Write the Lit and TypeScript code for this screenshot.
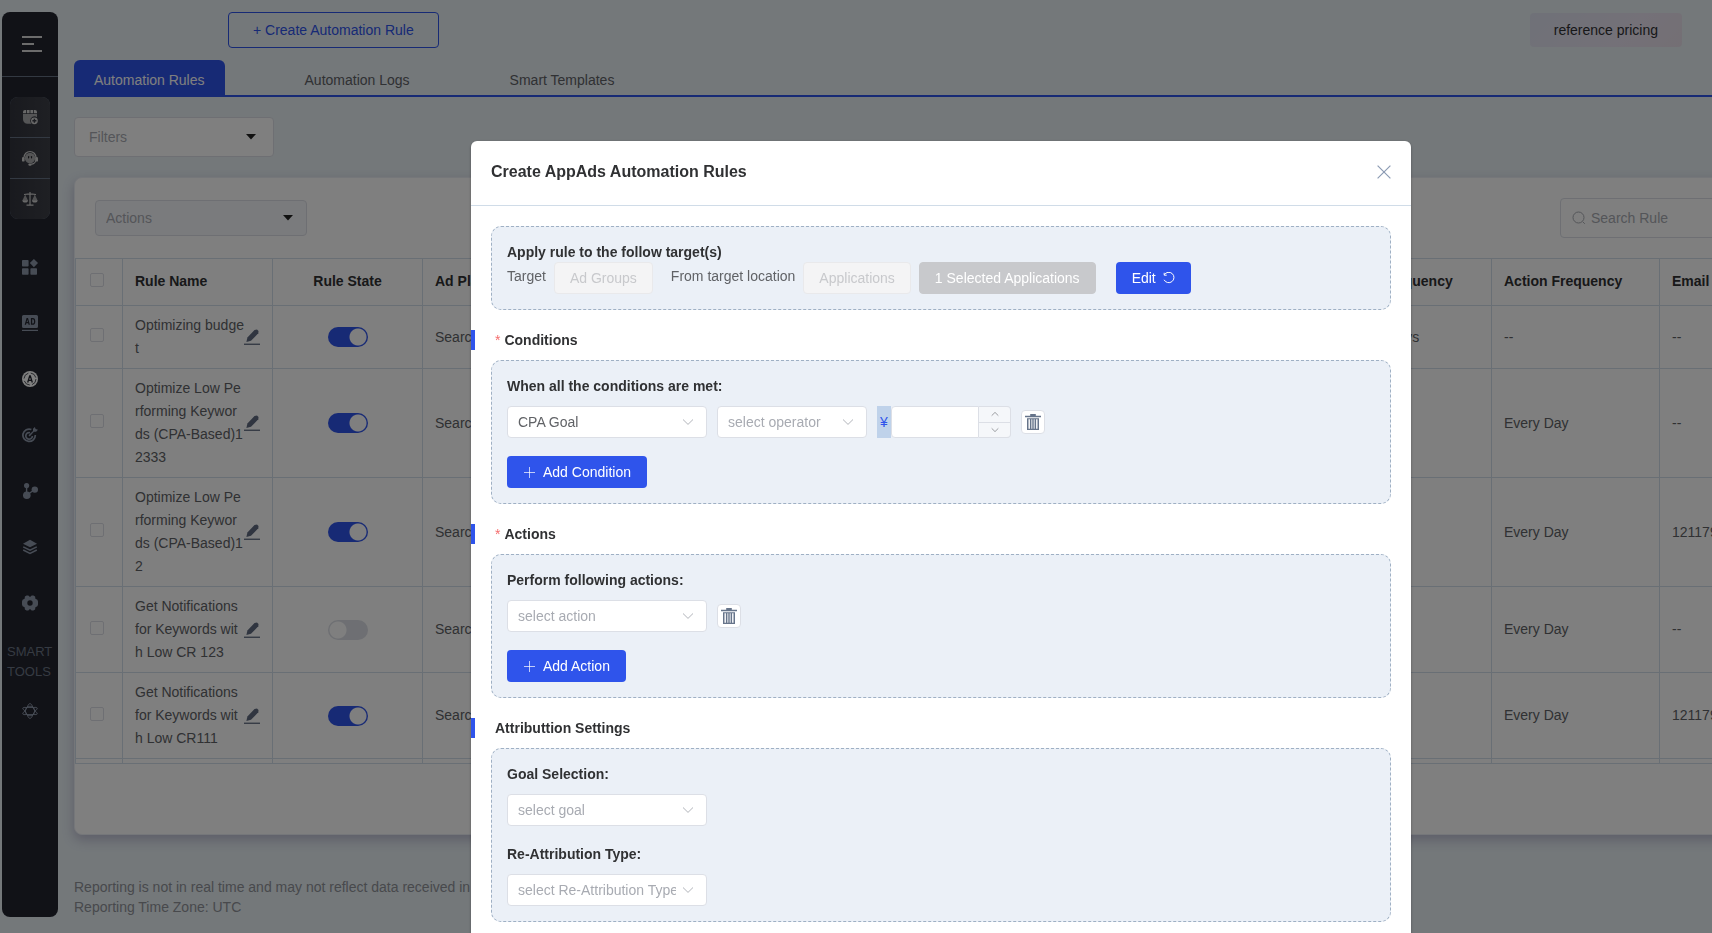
import { LitElement, html, css, svg, nothing, TemplateResult } from "lit";
import { customElement, property } from "lit/decorators.js";

interface Rule {
  name: string;
  on: boolean;
  platform: string;
  check: string;
  frequency: string;
  email: string;
}

const keywordRule = (name: string, on: boolean, email: string): Rule => ({
  name,
  on,
  platform: "Search Ads",
  check: "",
  frequency: "Every Day",
  email,
});

const RULES: Rule[] = [
  {
    name: "Optimizing budget",
    on: true,
    platform: "Search Ads",
    check: "Every 2 Days",
    frequency: "--",
    email: "--",
  },
  keywordRule("Optimize Low Performing Keywords (CPA-Based)12333", true, "--"),
  keywordRule("Optimize Low Performing Keywords (CPA-Based)12", true, "1211790"),
  keywordRule("Get Notifications for Keywords with Low CR 123", false, "--"),
  keywordRule("Get Notifications for Keywords with Low CR111", true, "1211790"),
];

const icon = (body: TemplateResult, size = 16, box = 16) => html`
  <svg width=${size} height=${size} viewBox="0 0 ${box} ${box}" fill="currentColor" aria-hidden="true">${body}</svg>
`;

const calendar = icon(svg`
  <path d="M1 4.200V3a2 2 0 0 1 2-2h1.200v3.200zM5 1h2.600v3.200H5zM8.400 1H11v3.200H8.400zM11.800 1H13a2 2 0 0 1 2 2v1.200h-3.200z"/>
  <path d="M1 5h14v3.200a4.300 4.300 0 0 0-6.800 3.400c0 1.300.5 2.400 1.400 3.200H5.500A4.500 4.500 0 0 1 1 10.300z" opacity=".75"/>
  <path fill-rule="evenodd" d="M12.400 8.400a3.400 3.400 0 1 0 0 6.800 3.400 3.400 0 0 0 0-6.800zm-.7 1.400h1.400v1.300h1.300v1.400h-1.300v1.300h-1.400v-1.300h-1.300v-1.400h1.300z"/>
`);

const headset = icon(svg`
  <path d="M2 7.500a6 6 0 0 1 12 0v2a5 5 0 0 1-4.800 4.700" fill="none" stroke="currentColor" stroke-width="1.200"/>
  <rect x="0" y="7" width="2.600" height="4.600" rx="1.200"/>
  <rect x="13.400" y="7" width="2.600" height="4.600" rx="1.200"/>
  <rect x="6.400" y="13.400" width="3.200" height="2.400" rx="1.200"/>
  <circle cx="8" cy="8" r="5.200" opacity=".75"/>
  <rect x="6" y="6" width="1.200" height="2.400" rx=".6" fill="#26282f"/>
  <rect x="8.900" y="6" width="1.200" height="2.400" rx=".6" fill="#26282f"/>
`);

const scales = icon(svg`
  <path d="M7.400 1h1.200v12.600H7.400zM2 3.100l5.400-.9v-.5h1.200v.5l5.400.9v1L8.600 3.400H7.400L2 4.100zM4.500 13.600h7v1.200h-7z"/>
  <path d="M3.200 3.600 .4 9.600h5.600zM12.800 3.600 10 9.600h5.600z" opacity=".7"/>
  <path d="M.4 9.200h5.600a2.800 2.400 0 0 1-5.600 0zM10 9.200h5.600a2.800 2.400 0 0 1-5.600 0z"/>
`);

const dashboard = icon(svg`
  <rect x="0" y="1" width="6.600" height="6.600" rx=".8"/>
  <rect x="0" y="9.200" width="6.600" height="6.600" rx=".8"/>
  <rect x="8.400" y="9.200" width="6.600" height="6.600" rx=".8"/>
  <path d="M11.900 0l4.100 4.100-4.100 4.100-4.100-4.100z"/>
`);

const adBoard = icon(svg`
  <path fill-rule="evenodd" d="M1.500 0h13A1.500 1.500 0 0 1 16 1.500v10a1.500 1.500 0 0 1-1.500 1.500h-13A1.500 1.500 0 0 1 0 11.500v-10A1.500 1.500 0 0 1 1.500 0zM4.600 3 2.700 9.800h1.300l.4-1.500h1.800l.4 1.500h1.300L6 3zm.7 1.600.6 2.500H4.700zM8.900 3v6.800h1.900c1.600 0 2.500-1.200 2.500-3.400S12.400 3 10.800 3zm1.300 1.200h.5c.9 0 1.300.8 1.300 2.200s-.4 2.200-1.300 2.200h-.5z"/>
  <rect x="0" y="14.800" width="16" height="1.200"/>
`);

const appCoin = icon(svg`
  <circle cx="8" cy="8" r="8"/>
  <circle cx="8" cy="8" r="6" fill="none" stroke="#3a3c46" stroke-width=".9" stroke-dasharray="7 2.425"/>
  <path d="M5.700 11.500 7.700 4.800h.6l2 6.700M6.500 9.400h3" fill="none" stroke="#22242e" stroke-width="1.300"/>
`);

const target = icon(svg`
  <path d="M9.400 2.500A6.200 6.200 0 1 0 13.300 8" fill="none" stroke="currentColor" stroke-width="1.700"/>
  <path d="M8 5.700A3.300 3.300 0 1 0 10.400 9" fill="none" stroke="currentColor" stroke-width="1.700"/>
  <path d="M6.500 8.300 11 3.900V1.800L12.900 0l.7 2 2.400.8-1.900 2h-2.200L7.700 9.500z"/>
`);

const branch = icon(svg`
  <circle cx="4.600" cy="2.600" r="2.600"/>
  <circle cx="12.800" cy="6.600" r="3.200"/>
  <circle cx="4.800" cy="12.200" r="3.800"/>
  <path d="M4.600 3v8M5 12l7-5" stroke="currentColor" stroke-width="1.400"/>
`);

const layers = icon(svg`
  <path d="M8 .8 15 4.800 8 8.200 1 4.800z"/>
  <path d="M1.200 7.800 8 11.200l6.800-3.400M1.200 11l6.800 3.400 6.800-3.400" fill="none" stroke="currentColor" stroke-width="1.500"/>
`);

const gear = icon(svg`
  <path fill-rule="evenodd" d="M4.600.6h1.700L8 2 9.700.6h1.700l1.700 1 .3 2.200 2 .9.600 1.800v3l-.6 1.800-2 .9-.3 2.200-1.700 1H9.700L8 14l-1.700 1.400H4.600l-1.700-1-.3-2.200-2-.9L0 9.500v-3l.6-1.800 2-.9.3-2.200zM8 5.300a2.700 2.700 0 1 0 0 5.400 2.700 2.700 0 0 0 0-5.400z"/>
`);

const atom = icon(svg`
  <g fill="none" stroke="currentColor" stroke-width=".9">
    <path d="M5 4.500Q6.400.5 8 .5t3 4q4-.6 4.300.6T12.800 8q2.800 1.800 2.500 2.900t-4.300.6q-1.400 4-3 4t-3-4q-4 .6-4.300-.6T3.200 8Q.4 6.200.7 5.100T5 4.500z"/>
    <circle cx="8" cy="8" r="4.800"/>
    <path d="M5 4.500h6L12.800 8 11 11.500H5L3.200 8z"/>
  </g>
`);

const pencil = icon(svg`
  <path d="M10.500 1 13 .6l1.500 1.500-.2 2.200L7 11.800l-4.600 1.300L3.400 8.400z"/>
  <rect x="0" y="14.600" width="16" height="1.300"/>
`);

const caret = icon(svg`<path d="M0 0h10L5 5.500z"/>`, 10, 10);
const chevron = (size: number, up = false) => html`
  <svg width=${size} height=${size} viewBox="0 0 12 12" fill="none" stroke="currentColor" stroke-width=".9" aria-hidden="true">
    <path d=${up ? "M1 8.500 6 3.600l5 4.900" : "M1 3.500 6 8.400l5-4.900"} />
  </svg>
`;
const magnifier = html`
  <svg width="14" height="14" viewBox="0 0 14 14" fill="none" stroke="currentColor" aria-hidden="true">
    <circle cx="6.500" cy="6.500" r="5.500" /><path d="M10.800 10.800l2 2" />
  </svg>
`;
const cross = html`
  <svg width="14" height="14" viewBox="0 0 14 14" stroke="currentColor" stroke-width="1.200" aria-hidden="true">
    <path d="M.6.6l12.800 12.800M13.400.6L.6 13.400" />
  </svg>
`;
const plus = html`
  <svg width="12" height="12" viewBox="0 0 12 12" stroke="currentColor" stroke-opacity=".7" aria-hidden="true">
    <path d="M6.500 1v11M1 6.500h11" />
  </svg>
`;
const redo = html`
  <svg width="12" height="12" viewBox="0 0 12 12" fill="none" stroke="currentColor" aria-hidden="true">
    <path d="M1.300 2.800A5.200 5.200 0 1 1 1.100 7.800M1.200.8v2.400h2.500" />
  </svg>
`;
const bin = icon(svg`
  <path d="M5.200 0h5.600v1.800H16v1.500H0V1.800h5.200z"/>
  <path fill-rule="evenodd" d="M2 4.200h12V16H2zm1.500 1v9.500h1.400V5.200zm2.900 0v9.500h.9V5.200zm2.300 0v9.500h.9V5.200zm2.400 0v9.500h1.400V5.200z"/>
`);

const base = css`
  :host {
    box-sizing: border-box;
    font: 14px/20px "Liberation Sans", Arial, sans-serif;
  }
  *,
  *::before,
  *::after {
    box-sizing: border-box;
  }
  svg {
    display: block;
    flex: none;
  }
  button,
  input,
  select {
    font: inherit;
    color: inherit;
    margin: 0;
    padding: 0;
    border: 0;
    outline: 0;
    background: none;
  }
  button {
    cursor: pointer;
  }
`;

@customElement("side-nav")
export class SideNav extends LitElement {
  static styles = [
    base,
    css`
      :host {
        display: flex;
        flex-direction: column;
        flex: none;
        width: 56px;
        margin: 12px 16px 16px 2px;
        border-radius: 8px;
        background: #22242e;
        color: #8e98ab;
      }
      .menu {
        display: flex;
        flex-direction: column;
        align-items: flex-start;
        gap: 5px;
        height: 65px;
        padding: 24px 20px;
        border-bottom: 1px solid #667385;
      }
      .bar {
        width: 20px;
        height: 2px;
        background: #d8d8d8;
      }
      .short {
        width: 12px;
      }
      .group {
        display: flex;
        flex-direction: column;
        gap: 1px;
        margin: 20px 8px;
        border-radius: 8px;
        overflow: hidden;
        background: #667385;
        color: #d0d0d0;
      }
      .tool {
        display: grid;
        place-items: center;
        height: 40px;
        color: inherit;
        background: linear-gradient(90deg, #32343d, #3e4048);
      }
      .links {
        display: flex;
        flex-direction: column;
      }
      .link {
        display: grid;
        place-items: center;
        height: 56px;
        color: inherit;
      }
      .current {
        color: #fff;
      }
      .caption {
        margin: 11px 0 1px;
        padding-left: 5px;
        font-size: 13px;
        color: #6c7686;
      }
    `,
  ];

  render() {
    const links: [string, TemplateResult][] = [
      ["Dashboard", dashboard],
      ["Ads", adBoard],
      ["AppAds", appCoin],
      ["Goals", target],
      ["Attribution", branch],
      ["Layers", layers],
      ["Settings", gear],
    ];
    const tools: [string, TemplateResult][] = [
      ["Calendar", calendar],
      ["Support", headset],
      ["Compare", scales],
    ];
    return html`
      <button class="menu" aria-label="Menu">
        <span class="bar"></span><span class="bar short"></span><span class="bar"></span>
      </button>
      <div class="group">
        ${tools.map(([label, glyph]) => html`<a class="tool" href="#" aria-label=${label}>${glyph}</a>`)}
      </div>
      <nav class="links">
        ${links.map(
          ([label, glyph]) =>
            html`<a class="link ${label === "AppAds" ? "current" : ""}" href="#" aria-label=${label}>${glyph}</a>`
        )}
        <p class="caption">SMART<br />TOOLS</p>
        <a class="link" href="#" aria-label="Smart tools">${atom}</a>
      </nav>
    `;
  }
}

@customElement("rules-page")
export class RulesPage extends LitElement {
  static styles = [
    base,
    css`
      :host {
        display: block;
        flex: 1;
        min-width: 0;
        padding-top: 12px;
        color: #606266;
      }
      .top {
        display: flex;
        justify-content: space-between;
        align-items: center;
        padding: 0 30px 0 154px;
      }
      .create {
        height: 36px;
        padding: 0 24px;
        border: 1px solid #2f54eb;
        border-radius: 4px;
        color: #2f54eb;
      }
      .pricing {
        height: 34px;
        padding: 0 24px;
        border-radius: 4px;
        color: #303133;
        background: linear-gradient(135deg, #dfe3f0, #e8e2f1 60%, #e8dfe9);
      }
      .tabs {
        display: flex;
        gap: 60px;
        height: 37px;
        margin-top: 12px;
        border-bottom: 2px solid #2f54eb;
      }
      .tab {
        padding: 4px 20px 0;
        height: 35px;
        border-radius: 6px 6px 0 0;
      }
      .active {
        color: #fff;
        background: #2f54eb;
      }
      .picker {
        display: grid;
        align-items: center;
        border: 1px solid #dcdfe6;
        border-radius: 4px;
        color: #222;
      }
      .picker > * {
        grid-area: 1 / 1;
      }
      .picker svg {
        justify-self: end;
        margin-top: 4px;
        pointer-events: none;
      }
      .picker select {
        appearance: none;
        width: 100%;
        height: 100%;
        color: #a8abb2;
      }
      .filters {
        width: 200px;
        height: 40px;
        margin: 20px 0;
        padding: 0 17px 0 14px;
        background: #fff;
      }
      .bulk {
        width: 212px;
        height: 36px;
        padding: 0 13px 0 10px;
        background: #f5f6fa;
      }
      .card {
        min-width: 1708px;
        padding-bottom: 70px;
        border: 1px solid #ebeef5;
        border-radius: 8px;
        background: #fff;
        box-shadow: 0 5px 12px rgba(70, 50, 110, 0.28);
      }
      .toolbar {
        display: flex;
        justify-content: space-between;
        align-items: center;
        height: 80px;
        padding: 0 20px;
      }
      .search {
        display: flex;
        align-items: center;
        gap: 5px;
        width: 201px;
        height: 40px;
        padding: 0 11px;
        border: 1px solid #dcdfe6;
        border-radius: 4px;
        color: #a8abb2;
      }
      .search input {
        flex: 1;
        min-width: 0;
      }
      ::placeholder {
        color: #a8abb2;
        opacity: 1;
      }
      .scroller {
        height: 506px;
        overflow: hidden;
        border-bottom: 1px solid #d3deeb;
      }
      table {
        width: 100%;
        table-layout: fixed;
        border-collapse: separate;
        border-spacing: 0;
        border-top: 1px solid #d3deeb;
        border-left: 1px solid #d3deeb;
      }
      th,
      td {
        padding: 8px 12px;
        border-right: 1px solid #d3deeb;
        border-bottom: 1px solid #d3deeb;
        text-align: left;
        line-height: 23px;
        word-break: break-all;
      }
      th {
        height: 47px;
        padding: 0 12px 2px;
        color: #303133;
        white-space: nowrap;
      }
      td:first-child,
      th:first-child {
        padding: 0 14px;
      }
      .state {
        text-align: center;
      }
      .box {
        appearance: none;
        display: block;
        width: 14px;
        height: 14px;
        margin-bottom: 4px;
        border: 1px solid #dcdfe6;
        border-radius: 2px;
        background: #fff;
      }
      .name {
        display: flex;
        align-items: center;
      }
      .label {
        flex: 1;
      }
      .edit {
        color: #606b80;
      }
      .switch {
        appearance: none;
        display: block;
        width: 40px;
        height: 20px;
        margin: 0 auto;
        border-radius: 10px;
        background: radial-gradient(circle at 10px 10px, #fff 8px, transparent 9px) #dcdfe6;
      }
      .switch:checked {
        background: radial-gradient(circle at 30px 10px, #fff 8px, transparent 9px) #2f54eb;
      }
      .c-box {
        width: 47px;
      }
      .c-name {
        width: 150px;
      }
      .c-freq {
        width: 168px;
      }
      .c-email {
        width: 121px;
      }
      .note {
        margin: 42px 0 0;
        color: #909399;
        white-space: nowrap;
      }
    `,
  ];

  render() {
    return html`
      <header class="top">
        <button class="create">+ Create Automation Rule</button>
        <button class="pricing">reference pricing</button>
      </header>
      <nav class="tabs">
        <button class="tab active">Automation Rules</button>
        <button class="tab">Automation Logs</button>
        <button class="tab">Smart Templates</button>
      </nav>
      <div class="picker filters">
        <select aria-label="Filters"><option>Filters</option></select>
        ${caret}
      </div>
      <section class="card">
        <div class="toolbar">
          <div class="picker bulk">
            <select aria-label="Actions"><option>Actions</option></select>
            ${caret}
          </div>
          <label class="search">${magnifier}<input placeholder="Search Rule" aria-label="Search Rule" /></label>
        </div>
        <div class="scroller">
          <table>
            <colgroup>
              <col class="c-box" />
              <col class="c-name" />
              <col class="c-name" />
              <col class="c-name" />
              <col />
              <col class="c-freq" />
              <col class="c-freq" />
              <col class="c-email" />
            </colgroup>
            <thead>
              <tr>
                <th><input class="box" type="checkbox" aria-label="Select all rules" /></th>
                <th>Rule Name</th>
                <th class="state">Rule State</th>
                <th>Ad Platform</th>
                <th></th>
                <th>Check Frequency</th>
                <th>Action Frequency</th>
                <th>Email</th>
              </tr>
            </thead>
            <tbody>
              ${RULES.map(
                (r) => html`
                  <tr>
                    <td><input class="box" type="checkbox" aria-label="Select ${r.name}" /></td>
                    <td>
                      <div class="name">
                        <span class="label">${r.name}</span>
                        <button class="edit" aria-label="Edit name">${pencil}</button>
                      </div>
                    </td>
                    <td>
                      <input class="switch" type="checkbox" role="switch" aria-label="Rule state" .checked=${r.on} />
                    </td>
                    <td>${r.platform}</td>
                    <td></td>
                    <td>${r.check || nothing}</td>
                    <td>${r.frequency}</td>
                    <td>${r.email}</td>
                  </tr>
                `
              )}
              <tr>
                <td></td>
                <td></td>
                <td></td>
                <td></td>
                <td></td>
                <td></td>
                <td></td>
                <td></td>
              </tr>
            </tbody>
          </table>
        </div>
      </section>
      <p class="note">
        Reporting is not in real time and may not reflect data received in the last hours.<br />
        Reporting Time Zone: UTC
      </p>
    `;
  }
}

@customElement("form-select")
export class FormSelect extends LitElement {
  @property() label = "";
  @property() value = "";
  @property() placeholder = "";

  static styles = [
    base,
    css`
      :host {
        display: grid;
        align-items: center;
        width: 200px;
        height: 32px;
        border: 1px solid #dcdfe6;
        border-radius: 4px;
        background: #fff;
        color: #a8abb2;
        overflow: hidden;
      }
      select,
      svg {
        grid-area: 1 / 1;
      }
      select {
        appearance: none;
        width: 100%;
        height: 30px;
        padding: 0 30px 0 10px;
      }
      .filled {
        color: #606266;
      }
      svg {
        justify-self: end;
        margin-right: 12px;
        pointer-events: none;
      }
    `,
  ];

  render() {
    return html`
      <select class=${this.value ? "filled" : ""} aria-label=${this.label}>
        <option>${this.value || this.placeholder}</option>
      </select>
      ${chevron(12)}
    `;
  }
}

@customElement("rule-dialog")
export class RuleDialog extends LitElement {
  static styles = [
    base,
    css`
      :host {
        display: block;
        width: calc(100% - 40px);
        max-width: 940px;
        min-height: 840px;
        border-radius: 6px;
        background: #fff;
        color: #303133;
        box-shadow: 0 1px 3px rgba(0, 0, 0, 0.3);
      }
      .head {
        display: flex;
        align-items: center;
        justify-content: space-between;
        height: 65px;
        padding: 0 20px 2px;
        border-bottom: 1px solid #d0dce8;
      }
      h2 {
        margin: 0;
        font-size: 16px;
      }
      .close {
        color: #8c9bb3;
      }
      .body {
        padding: 20px;
      }
      .panel {
        display: flex;
        flex-direction: column;
        align-items: flex-start;
        padding: 15px;
        border: 1px dashed #9fb0c4;
        border-radius: 10px;
        background: #ebf0f7;
      }
      .title,
      .section {
        margin: 0;
        font-size: 14px;
        font-weight: bold;
      }
      .section {
        margin: 20px -20px 10px;
        padding-left: 20px;
        border-left: 4px solid #2f54eb;
      }
      .star {
        margin-right: 4px;
        font-weight: normal;
        color: #f56c6c;
      }
      .row {
        display: flex;
        align-items: center;
        flex-wrap: wrap;
        gap: 10px;
      }
      .title + .row,
      .title + form-select {
        margin-top: 10px;
      }
      .row + .primary,
      form-select + .title {
        margin-top: 18px;
      }
      .targets {
        display: flex;
        flex-wrap: wrap;
        gap: 8px;
        line-height: 28px;
        color: #606266;
      }
      .from {
        margin-left: 10px;
      }
      .chip {
        height: 32px;
        padding: 0 15px;
        border: 1px solid #e9e9eb;
        border-radius: 4px;
        background: #f4f4f5;
        color: #c8c9cc;
      }
      .chosen {
        border-color: #c8c9cc;
        background: #c8c9cc;
        color: #fff;
      }
      .primary {
        display: inline-flex;
        align-items: center;
        gap: 8px;
        height: 32px;
        padding: 0 16px;
        border-radius: 4px;
        background: #2f54eb;
        color: #fff;
      }
      .again {
        gap: 7px;
        margin-left: 12px;
      }
      .operator {
        width: 150px;
      }
      .amount {
        display: flex;
        width: 134px;
        height: 32px;
      }
      .currency {
        width: 14px;
        line-height: 32px;
        text-align: center;
        background: #bfd2ea;
        color: #2f54eb;
      }
      .amount input {
        flex: 1;
        min-width: 0;
        padding: 0 8px;
        border: 1px solid #dcdfe6;
        border-radius: 4px 0 0 4px;
        background: #fff;
      }
      .steps {
        display: grid;
        grid-template-rows: 1fr 1fr;
        gap: 1px;
        width: 32px;
        border: 1px solid #dcdfe6;
        border-left: 0;
        border-radius: 0 4px 4px 0;
        overflow: hidden;
        background: #dcdfe6;
      }
      .step {
        display: grid;
        place-items: center;
        background: #f5f7fa;
        color: #606266;
      }
      .delete {
        display: grid;
        place-items: center;
        width: 24px;
        height: 24px;
        border: 1px solid #dcdfe6;
        border-radius: 4px;
        background: #fff;
        color: #66748a;
      }
    `,
  ];

  render() {
    return html`
      <header class="head">
        <h2>Create AppAds Automation Rules</h2>
        <button class="close" aria-label="Close">${cross}</button>
      </header>
      <div class="body">
        <div class="panel">
          <h3 class="title">Apply rule to the follow target(s)</h3>
          <div class="targets">
            <span>Target</span>
            <button class="chip" disabled>Ad Groups</button>
            <span class="from">From target location</span>
            <button class="chip" disabled>Applications</button>
            <button class="chip chosen" disabled>1 Selected Applications</button>
            <button class="primary again">Edit ${redo}</button>
          </div>
        </div>

        <h3 class="section"><span class="star">*</span>Conditions</h3>
        <div class="panel">
          <h4 class="title">When all the conditions are met:</h4>
          <div class="row">
            <form-select label="Condition" value="CPA Goal"></form-select>
            <form-select class="operator" label="Operator" placeholder="select operator"></form-select>
            <div class="amount">
              <span class="currency">¥</span>
              <input type="text" inputmode="decimal" aria-label="Amount" />
              <div class="steps">
                <button class="step" aria-label="Increase">${chevron(8, true)}</button>
                <button class="step" aria-label="Decrease">${chevron(8)}</button>
              </div>
            </div>
            <button class="delete" aria-label="Delete condition">${bin}</button>
          </div>
          <button class="primary">${plus}Add Condition</button>
        </div>

        <h3 class="section"><span class="star">*</span>Actions</h3>
        <div class="panel">
          <h4 class="title">Perform following actions:</h4>
          <div class="row">
            <form-select label="Action" placeholder="select action"></form-select>
            <button class="delete" aria-label="Delete action">${bin}</button>
          </div>
          <button class="primary">${plus}Add Action</button>
        </div>

        <h3 class="section">Attributtion Settings</h3>
        <div class="panel">
          <h4 class="title">Goal Selection:</h4>
          <form-select label="Goal Selection" placeholder="select goal"></form-select>
          <h4 class="title">Re-Attribution Type:</h4>
          <form-select label="Re-Attribution Type" placeholder="select Re-Attribution Type"></form-select>
        </div>
      </div>
    `;
  }
}

@customElement("app-root")
export class AppRoot extends LitElement {
  static styles = [
    base,
    css`
      :host {
        display: block;
        height: 100vh;
        overflow: hidden;
      }
      .page {
        display: flex;
        height: 100%;
        background: #e8f0f5;
      }
      .overlay {
        position: fixed;
        inset: 0;
        display: flex;
        justify-content: center;
        align-items: flex-start;
        padding: 141px 0 0 170px;
        overflow: hidden;
        background: rgba(0, 0, 0, 0.5);
      }
    `,
  ];

  render() {
    return html`
      <div class="page">
        <side-nav></side-nav>
        <rules-page></rules-page>
      </div>
      <div class="overlay" role="dialog" aria-modal="true" aria-label="Create AppAds Automation Rules">
        <rule-dialog></rule-dialog>
      </div>
    `;
  }
}
